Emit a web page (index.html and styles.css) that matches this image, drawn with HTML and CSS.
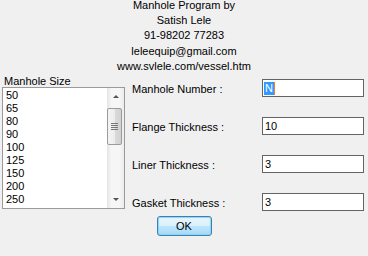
FILE: index.html
```html
<!DOCTYPE html>
<html lang="en">
<head>
  <meta charset="UTF-8">
  <title>Manhole</title>
  <link rel="stylesheet" href="styles.css">
</head>
<body>
<div class="head">
  <p>Manhole Program by</p>
  <p>Satish Lele</p>
  <p>91-98202 77283</p>
  <p>leleequip@gmail.com</p>
  <p>www.svlele.com/vessel.htm</p>
</div>
<div class="main">
  <div class="sizes">
    <div class="cap">Manhole Size</div>
    <div class="list">
      <ul>
        <li>50</li>
        <li>65</li>
        <li>80</li>
        <li>90</li>
        <li>100</li>
        <li>125</li>
        <li>150</li>
        <li>200</li>
        <li>250</li>
      </ul>
      <!--滚动条-->
      <div class="bar">
        <span class="arrow"><i class="up"></i></span>
        <span class="thumb"><b></b><b></b><b></b><b></b></span>
        <span class="track"></span>
        <span class="arrow"><i class="down"></i></span>
      </div>
    </div>
  </div>
  <div class="form">
    <label>Manhole Number :</label>
    <div class="box"><span class="sel">N</span></div>
    <label>Flange Thickness :</label>
    <div class="box">10</div>
    <label>Liner Thickness :</label>
    <div class="box">3</div>
    <label>Gasket Thickness :</label>
    <div class="box">3</div>
  </div>
</div>
<div class="foot"><button class="ok">OK</button></div>
</body>
</html>
```

FILE: styles.css
```css
* {
  margin: 0;
  padding: 0;
  box-sizing: border-box;
}

body {
  background: #f0f0f0;
  font: 11px "Liberation Sans", Arial, sans-serif;
  color: #000;
  overflow: hidden;
}

.head {
  text-align: center;
  line-height: 15.2px;
  margin-top: -2px;
}

.main {
  display: flex;
  margin-top: 2px;
}

.sizes {
  margin-left: 2px;
  width: 123px;
}

.cap {
  line-height: 11px;
  padding-left: 2px;
}

.list {
  display: flex;
  height: 122px;
  border: 1px solid #9a9a9a;
  background: #fff;
}

.list ul {
  flex: 1;
  list-style: none;
  padding: 1px 0 0 3px;
  line-height: 13px;
}

.bar {
  width: 17px;
  display: flex;
  flex-direction: column;
  background: linear-gradient(to right, #e4e4e4, #f6f6f6 25%, #f6f6f6 75%, #ebebeb);
}

.arrow {
  height: 17px;
  display: flex;
  align-items: center;
  justify-content: center;
}

.arrow i {
  width: 0;
  height: 0;
  border-left: 3px solid transparent;
  border-right: 3px solid transparent;
}

.arrow .up {
  border-bottom: 3px solid #555;
}

.arrow .down {
  border-top: 3px solid #555;
}

.thumb {
  height: 37px;
  margin: 3px 2px 0 0;
  border: 1px solid #9b9b9b;
  border-radius: 2px;
  background: linear-gradient(to right, #f4f4f4, #ececec 50%, #dadada 51%, #d2d2d2);
  display: flex;
  flex-direction: column;
  align-items: center;
  justify-content: center;
  gap: 1px;
}

.thumb b {
  width: 7px;
  height: 1px;
  background: #777;
}

.track {
  flex: 1;
}

.form {
  display: grid;
  grid-template-columns: 130px 102px;
  grid-auto-rows: 18px;
  row-gap: 20px;
  margin: 3px 0 0 7px;
}

.form label {
  line-height: 18px;
  padding-top: 1px;
}

.box {
  height: 18px;
  border: 1px solid #646464;
  background: #fff;
  padding-left: 2px;
  line-height: 17px;
}

.sel {
  display: inline-block;
  margin-left: -1px;
  padding: 0 1px;
  line-height: 13px;
  background: #3399ff;
  color: #fff;
  border-right: 1px solid #f08030;
}

.foot {
  text-align: center;
  margin-top: 5px;
}

.ok {
  width: 55px;
  height: 20px;
  font: 11px "Liberation Sans", Arial, sans-serif;
  color: #000;
  border: 1px solid #3c7fb1;
  border-radius: 3px;
  background: linear-gradient(#eaf6fd, #d9f0fc 50%, #bee6fd 50%, #a7d9f5);
  box-shadow: inset 0 0 1px 1px #8ad5f7;
}
```
